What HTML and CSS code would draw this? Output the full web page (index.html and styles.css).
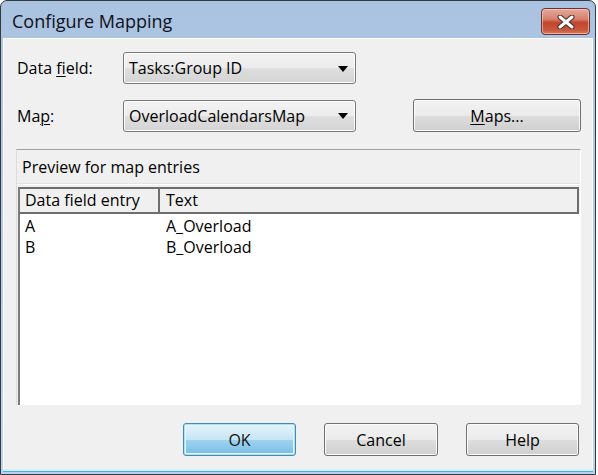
FILE: index.html
```html
<!DOCTYPE html>
<html>
<head>
<meta charset="utf-8">
<link rel="stylesheet" href="styles.css">
</head>
<body>
<div class="window">
  <div class="titlebar">
    <span class="title">Configure Mapping</span>
    <div class="close">
      <svg width="20" height="14" viewBox="0 0 20 14">
        <path d="M4 2 L16 12 M16 2 L4 12" stroke="#3b2b2b" stroke-width="5" stroke-linecap="round" fill="none"/>
        <path d="M4 2 L16 12 M16 2 L4 12" stroke="#ffffff" stroke-width="3" stroke-linecap="round" fill="none"/>
      </svg>
    </div>
  </div>
  <div class="content">
    <div class="row row1">
      <span class="label">Data <u>f</u>ield:</span>
      <div class="combo"><span>Tasks:Group ID</span><i class="arrow"></i></div>
    </div>
    <div class="row row2">
      <span class="label">Ma<u>p</u>:</span>
      <div class="combo"><span>OverloadCalendarsMap</span><i class="arrow"></i></div>
      <div class="btn maps"><u>M</u>aps...</div>
    </div>
    <div class="group">
      <div class="group-label">Preview for map entries</div>
      <div class="list">
        <div class="list-head">
          <div class="hcell c1">Data field entry</div>
          <div class="hcell c2">Text</div>
        </div>
        <div class="list-body">
          <div class="lrow"><span class="c1">A</span><span class="c2">A_Overload</span></div>
          <div class="lrow"><span class="c1">B</span><span class="c2">B_Overload</span></div>
        </div>
      </div>
    </div>
    <div class="buttons">
      <div class="btn default">OK</div>
      <div class="btn">Cancel</div>
      <div class="btn">Help</div>
    </div>
  </div>
</div>
</body>
</html>
```

FILE: styles.css
```css
html, body {
  margin: 0;
  padding: 0;
  background: #ffffff;
}
body {
  width: 598px;
  height: 475px;
  overflow: hidden;
  font-family: "Open Sans", "Noto Sans", sans-serif;
  font-size: 16px;
  color: #000;
}
.window {
  box-sizing: border-box;
  width: 596px;
  height: 475px;
  border: 1px solid #333a44;
  border-radius: 7px 7px 0 0;
  background: linear-gradient(#a9c3e0, #bcd3ec);
  padding: 0 2px 0 2px;
  display: flex;
  flex-direction: column;
}
.titlebar {
  height: 37px;
  flex: none;
  display: flex;
  align-items: flex-start;
  justify-content: space-between;
  box-sizing: border-box;
  padding: 0 3px 0 9px;
}
.title {
  font-size: 18px;
  line-height: 20px;
  margin-top: 10px;
  color: #101020;
}
.close {
  margin-top: 7px;
  width: 47px;
  height: 25px;
  border: 1px solid #6b3434;
  border-radius: 4px;
  background: linear-gradient(#e3a99a 0%, #d8826d 40%, #c3452c 55%, #c85a3e 85%, #d97a5c 100%);
  box-shadow: inset 0 0 0 1px rgba(255,220,210,0.55);
  display: flex;
  align-items: center;
  justify-content: center;
}
.close svg { display: block; }
.content {
  flex: 1;
  background: #f0f0f0;
  border: 1px solid #ffffff;
  border-bottom: none;
  box-shadow: 0 2px 0 0 #d6eef9, 0 3px 0 0 #3fb4dc;
  margin-bottom: 5px;
  padding: 0 11px 0 11px;
  display: flex;
  flex-direction: column;
}
.row {
  display: flex;
  align-items: center;
}
.row1 { margin-top: 13px; }
.row2 { margin-top: 15px; }
.label {
  width: 106px;
  padding-left: 2px;
}
.label u { text-decoration-thickness: 1px; text-underline-offset: 2px; }
.combo {
  box-sizing: border-box;
  width: 233px;
  height: 32px;
  border: 1px solid #7a7a7a;
  border-radius: 3px;
  background: linear-gradient(#f3f3f3 0%, #ececec 50%, #dedede 52%, #d4d4d4 100%);
  box-shadow: inset 0 0 0 1px #fcfcfc;
  display: flex;
  align-items: center;
  justify-content: space-between;
  padding: 0 7px 0 5px;
}
.arrow {
  width: 0;
  height: 0;
  border-left: 5.5px solid transparent;
  border-right: 5.5px solid transparent;
  border-top: 6px solid #000;
  margin-top: 1px;
}
.btn {
  box-sizing: border-box;
  height: 33px;
  border: 1px solid #707070;
  border-radius: 3px;
  background: linear-gradient(#f2f2f2 0%, #ebebeb 50%, #dddddd 52%, #cfcfcf 100%);
  box-shadow: inset 0 0 0 1px #fbfbfb;
  display: flex;
  align-items: center;
  justify-content: center;
}
.maps {
  width: 168px;
  margin-left: 57px;
}
.maps u { text-underline-offset: 2px; }
.group {
  margin-top: 17px;
  margin-left: 1px;
  width: 565px;
  box-sizing: border-box;
  border-top: 1px solid #a0a0a0;
  border-left: 1px solid #dcdcdc;
  border-right: 1px solid #ffffff;
  display: flex;
  flex-direction: column;
}
.group-label {
  height: 34px;
  line-height: 34px;
  padding-left: 5px;
  border-bottom: 1px solid #ffffff;
  box-shadow: 0 -1px 0 #e4e4e4 inset;
}
.list {
  margin-top: 2px;
  border-left: 2px solid #7a7a7a;
  margin-left: 1px;
  display: flex;
  flex-direction: column;
}
.list-head {
  display: flex;
  height: 27px;
  box-sizing: border-box;
  border: 2px solid #6e6e6e;
  border-left: none;
  background: #f0f0f0;
  margin-right: 1px;
}
.hcell {
  line-height: 23px;
  padding-left: 5px;
  box-sizing: border-box;
}
.hcell.c1 {
  width: 140px;
  border-right: 2px solid #6e6e6e;
}
.hcell.c2 { flex: 1; padding-left: 6px; }
.list-body {
  background: #ffffff;
  height: 191px;
  padding-top: 2px;
  box-sizing: border-box;
}
.lrow {
  display: flex;
  height: 21px;
  line-height: 21px;
}
.lrow .c1 { width: 142px; padding-left: 5px; box-sizing: border-box; }
.lrow .c2 { padding-left: 4px; }
.buttons {
  display: flex;
  justify-content: flex-end;
  gap: 28px;
  margin-top: 18px;
  margin-right: 2px;
}
.buttons .btn { width: 113px; }
.buttons .btn:nth-child(2) { width: 114px; }
.btn.default {
  border: 1px solid #3c7fb1;
  background: linear-gradient(#e5f4fc 0%, #c4e5f6 50%, #98d1ef 52%, #6cb9e5 100%);
  box-shadow: inset 0 0 0 1px #9fe2fb, inset 0 0 0 2px #e6f6fd;
  opacity: 0.92;
}
```
